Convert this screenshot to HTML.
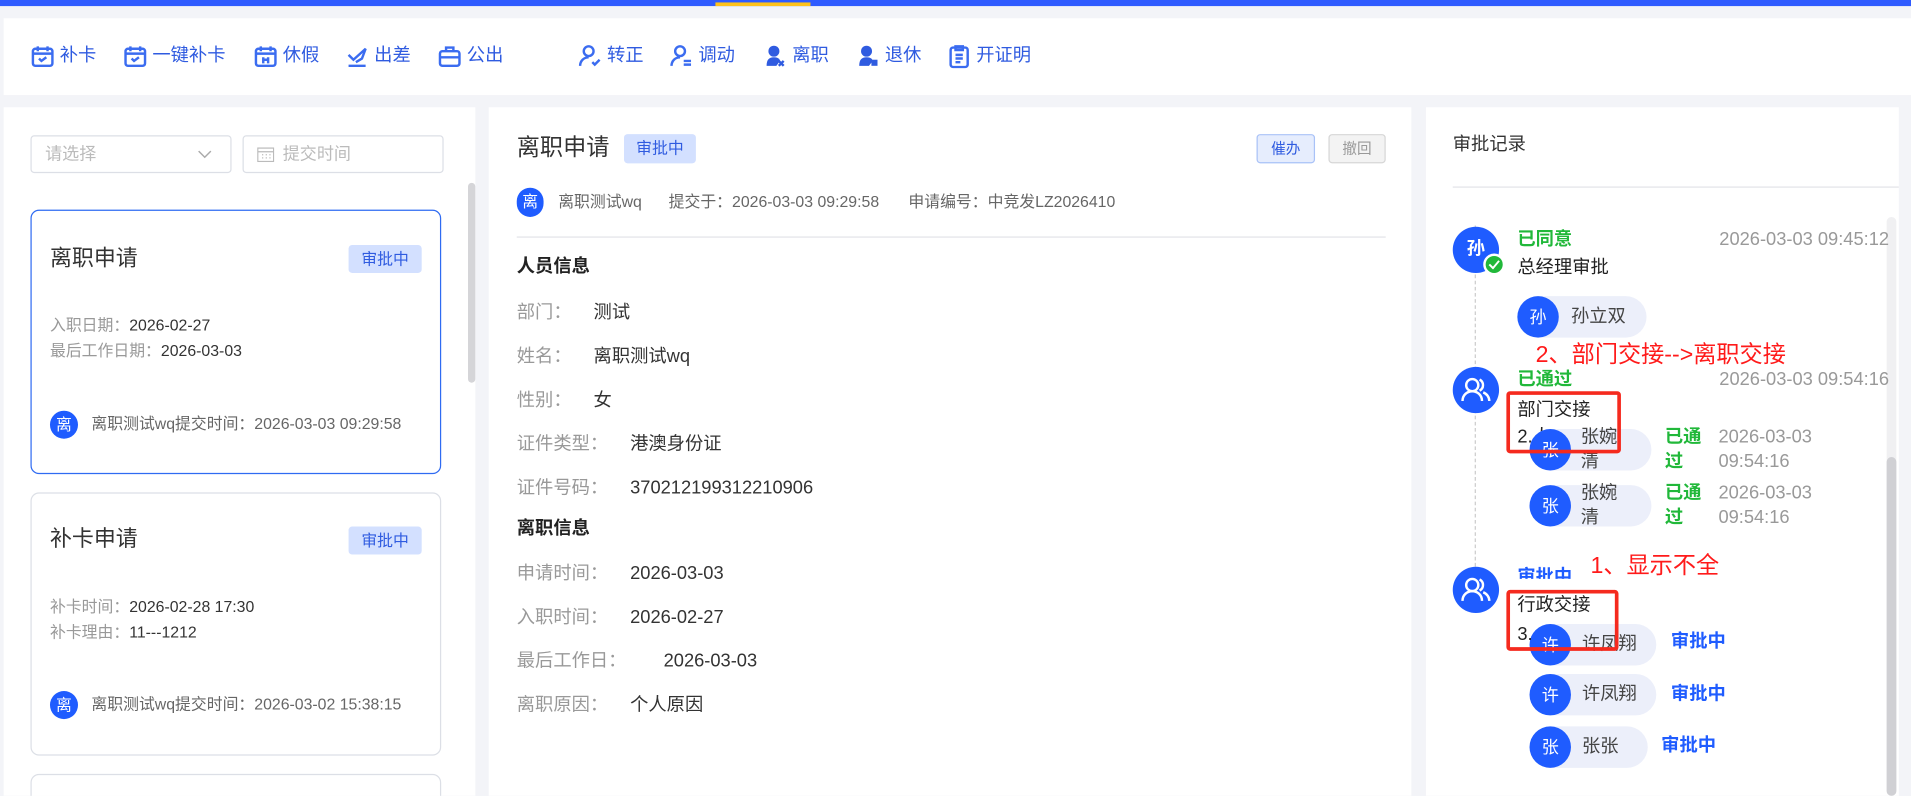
<!DOCTYPE html>
<html><head><meta charset="utf-8">
<style>
*{margin:0;padding:0;box-sizing:border-box}
html,body{width:1911px;height:796px;overflow:hidden;background:#f3f4f8}
body{font-family:"Liberation Sans","Noto Sans CJK SC",sans-serif;color:#333}
#w{position:absolute;left:0;top:0;width:1568px;height:653px;overflow:hidden;transform:scale(1.21875);transform-origin:0 0;background:#f3f4f8}
.a{position:absolute;white-space:nowrap}
.card{position:absolute;background:#fff}
.tb{position:absolute;top:36px;height:20px;line-height:20px;font-size:15px;color:#2f5be0;display:flex;align-items:center}
.tb svg{margin-right:4px}
.tag{position:absolute;background:#d3e0ff;color:#2f5be0;border-radius:3px;font-size:13px;text-align:center}
.av{position:absolute;border-radius:50%;background:#1f5cff;color:#fff;text-align:center;font-weight:bold}
.lc{position:absolute;left:25px;width:337px;border:1px solid #dcdfe6;border-radius:7px;background:#fff}
.lbl{color:#999}
.row{position:absolute;left:424px;font-size:15px;line-height:20px}
.row .lbl{margin-right:18px}
.pill{position:absolute;height:34px;border-radius:17px;background:#eceffa}
.pill .av{left:0;top:0;width:34px;height:34px;line-height:34px;font-size:14px;font-weight:normal}
.pill span{position:absolute;color:#444;font-size:15px}
.g{color:#21b83a;font-weight:bold}
.b{color:#1f5cff;font-weight:bold}
.t{color:#999;font-size:15px}
.red{color:#ff1a1a}
.rb{position:absolute;border:3px solid #f52a1e;border-radius:3px}
</style></head><body><div id="w">
<div class="a" style="left:0;top:0;width:1568px;height:5px;background:#2f5bff"></div>
<div class="a" style="left:587px;top:2px;width:78px;height:3px;background:#ffc21a"></div>
<div class="card" style="left:3px;top:15px;width:1565px;height:63px"></div>

<div class="tb" style="left:25px"><svg width="20" height="20" viewBox="0 0 20 20" fill="none" stroke="#3b6cf0" stroke-width="2"><rect x="2" y="4" width="16" height="14" rx="2"/><path d="M2 8h16M6 2v4M14 2v4M7 12l2 2 4-3"/></svg>补卡</div>
<div class="tb" style="left:101px"><svg width="20" height="20" viewBox="0 0 20 20" fill="none" stroke="#3b6cf0" stroke-width="2"><rect x="2" y="4" width="16" height="14" rx="2"/><path d="M2 8h16M6 2v4M14 2v4M7 12l2 2 4-3"/></svg>一键补卡</div>
<div class="tb" style="left:208px"><svg width="20" height="20" viewBox="0 0 20 20" fill="none" stroke="#3b6cf0" stroke-width="2"><rect x="2" y="4" width="16" height="14" rx="2"/><path d="M2 8h16M6 2v4M14 2v4M8 11v5M12 11v5M7 13h6"/></svg>休假</div>
<div class="tb" style="left:283px"><svg width="20" height="20" viewBox="0 0 20 20" fill="none" stroke="#3b6cf0" stroke-width="2"><path d="M3 9l4 4 10-9-3 8-5 3M3 18h14"/></svg>出差</div>
<div class="tb" style="left:359px"><svg width="20" height="20" viewBox="0 0 20 20" fill="none" stroke="#3b6cf0" stroke-width="2"><rect x="2" y="6" width="16" height="12" rx="2"/><path d="M7 6V3h6v3M2 11h16"/></svg>公出</div>
<div class="tb" style="left:474px"><svg width="20" height="20" viewBox="0 0 20 20" fill="none" stroke="#3b6cf0" stroke-width="2"><circle cx="9" cy="6" r="4"/><path d="M2 18c0-4 3-7 7-7M12 15l2 2 4-4"/></svg>转正</div>
<div class="tb" style="left:549px"><svg width="20" height="20" viewBox="0 0 20 20" fill="none" stroke="#3b6cf0" stroke-width="2"><circle cx="9" cy="6" r="4"/><path d="M2 18c0-4 3-7 7-7M12 14h6M12 17h6"/></svg>调动</div>
<div class="tb" style="left:626px"><svg width="20" height="20" viewBox="0 0 20 20" fill="#2f5be0"><circle cx="9" cy="6" r="4.5"/><path d="M3 18c0-5 2-7 6-7s5 2 5 3l-3 4z"/><path d="M13 14l4 4M17 14l-4 4" stroke="#2f5be0" stroke-width="2"/></svg>离职</div>
<div class="tb" style="left:702px"><svg width="20" height="20" viewBox="0 0 20 20" fill="#2f5be0"><circle cx="9" cy="6" r="4.5"/><path d="M3 18c0-5 2-7 6-7s5 2 5 3l-3 4z"/><rect x="13" y="13" width="5" height="5"/></svg>退休</div>
<div class="tb" style="left:777px"><svg width="20" height="20" viewBox="0 0 20 20" fill="none" stroke="#3b6cf0" stroke-width="2"><rect x="3" y="3" width="14" height="16" rx="2"/><path d="M7 2h6v3H7zM7 9h6M7 12h6M7 15h4"/></svg>开证明</div>

<!-- left panel -->
<div class="card" style="left:3px;top:88px;width:387px;height:565px"></div>
<div class="a" style="left:25px;top:111px;width:165px;height:31px;border:1px solid #dcdfe6;border-radius:3px"></div>
<div class="a" style="left:37px;top:116px;font-size:14px;line-height:20px;color:#bbb">请选择</div>
<svg class="a" style="left:162px;top:121px" width="12" height="10" viewBox="0 0 12 10" fill="none" stroke="#aaa" stroke-width="1.2"><path d="M1 3l5 5 5-5"/></svg>
<div class="a" style="left:199px;top:111px;width:165px;height:31px;border:1px solid #dcdfe6;border-radius:3px"></div>
<svg class="a" style="left:211px;top:120px" width="14" height="13" viewBox="0 0 14 13" fill="none" stroke="#bbb"><rect x="0.5" y="1.5" width="13" height="11"/><path d="M0.5 4.5h13M4 7h1M7 7h1M10 7h1M4 9.5h1M7 9.5h1M10 9.5h1"/></svg>
<div class="a" style="left:232px;top:116px;font-size:14px;line-height:20px;color:#bbb">提交时间</div>
<div class="a" style="left:384px;top:150px;width:6px;height:164px;border-radius:3px;background:#d5d5d8"></div>

<div class="lc" style="top:172px;height:217px;border-color:#2f6bf2"></div>
<div class="a" style="left:41px;top:200px;font-size:18px;line-height:24px;color:#333">离职申请</div>
<div class="tag" style="left:286px;top:201px;width:60px;height:23px;line-height:23px">审批中</div>
<div class="a" style="left:41px;top:257px;font-size:13px;line-height:20px"><span class="lbl">入职日期：</span>2026-02-27</div>
<div class="a" style="left:41px;top:278px;font-size:13px;line-height:20px"><span class="lbl">最后工作日期：</span>2026-03-03</div>
<div class="av" style="left:41px;top:337px;width:23px;height:23px;line-height:23px;font-size:13px;font-weight:normal">离</div>
<div class="a" style="left:75px;top:338px;font-size:13px;line-height:20px;color:#666">离职测试wq提交时间：2026-03-03 09:29:58</div>

<div class="lc" style="top:404px;height:216px"></div>
<div class="a" style="left:41px;top:430px;font-size:18px;line-height:24px;color:#333">补卡申请</div>
<div class="tag" style="left:286px;top:432px;width:60px;height:23px;line-height:23px">审批中</div>
<div class="a" style="left:41px;top:488px;font-size:13px;line-height:20px"><span class="lbl">补卡时间：</span>2026-02-28 17:30</div>
<div class="a" style="left:41px;top:509px;font-size:13px;line-height:20px"><span class="lbl">补卡理由：</span>11---1212</div>
<div class="av" style="left:41px;top:567px;width:23px;height:23px;line-height:23px;font-size:13px;font-weight:normal">离</div>
<div class="a" style="left:75px;top:568px;font-size:13px;line-height:20px;color:#666">离职测试wq提交时间：2026-03-02 15:38:15</div>
<div class="lc" style="top:635px;height:30px"></div>

<!-- middle -->
<div class="card" style="left:401px;top:88px;width:757px;height:565px"></div>
<div class="a" style="left:424px;top:109px;font-size:19px;line-height:26px;color:#333">离职申请</div>
<div class="tag" style="left:512px;top:110px;width:59px;height:24px;line-height:24px">审批中</div>
<div class="a" style="left:1031px;top:110px;width:48px;height:24px;line-height:22px;border:1px solid #a9c2f7;background:#e6edfd;color:#2f5be0;font-size:12px;text-align:center;border-radius:3px">催办</div>
<div class="a" style="left:1090px;top:110px;width:47px;height:24px;line-height:22px;border:1px solid #d6d6d6;background:#f3f3f3;color:#999;font-size:12px;text-align:center;border-radius:3px">撤回</div>
<div class="av" style="left:424px;top:154px;width:22px;height:24px;line-height:24px;font-size:13px;font-weight:normal;border-radius:11px">离</div>
<div class="a" style="left:458px;top:156px;font-size:13px;line-height:20px;color:#666">离职测试wq<span style="margin-left:22px">提交于：2026-03-03 09:29:58</span><span style="margin-left:24px">申请编号：中竞发LZ2026410</span></div>
<div class="a" style="left:424px;top:194px;width:713px;height:1px;background:#e2e3e8"></div>
<div class="row" style="top:209px;font-weight:bold;color:#222">人员信息</div>
<div class="row" style="top:247px"><span class="lbl">部门：</span>测试</div>
<div class="row" style="top:283px"><span class="lbl">姓名：</span>离职测试wq</div>
<div class="row" style="top:319px"><span class="lbl">性别：</span>女</div>
<div class="row" style="top:355px"><span class="lbl">证件类型：</span>港澳身份证</div>
<div class="row" style="top:391px"><span class="lbl">证件号码：</span>370212199312210906</div>
<div class="row" style="top:424px;font-weight:bold;color:#222">离职信息</div>
<div class="row" style="top:461px"><span class="lbl">申请时间：</span>2026-03-03</div>
<div class="row" style="top:497px"><span class="lbl">入职时间：</span>2026-02-27</div>
<div class="row" style="top:533px"><span class="lbl">最后工作日：</span>&nbsp;&nbsp;&nbsp;2026-03-03</div>
<div class="row" style="top:569px"><span class="lbl">离职原因：</span>个人原因</div>

<!-- right -->
<div class="card" style="left:1170px;top:88px;width:388px;height:565px"></div>
<div class="a" style="left:1548px;top:178px;width:8px;height:475px;border-radius:4px;background:#f0f0f2"></div>
<div class="a" style="left:1548px;top:375px;width:8px;height:278px;border-radius:4px;background:#d0d0d4"></div>
<div class="a" style="left:1192px;top:109px;font-size:15px;line-height:20px;color:#333">审批记录</div>
<div class="a" style="left:1192px;top:153px;width:366px;height:1px;background:#e2e3e8"></div>
<div class="a" style="left:1210px;top:185px;height:295px;border-left:1px dashed #ccc"></div>

<div class="av" style="left:1192px;top:186px;width:38px;height:38px;line-height:38px;font-size:15px">孙</div>
<div class="a" style="left:1217px;top:208px;width:18px;height:18px;border-radius:50%;background:#21b83a;border:2px solid #fff"></div>
<svg class="a" style="left:1221px;top:213px" width="10" height="8" viewBox="0 0 10 8" fill="none" stroke="#fff" stroke-width="1.6"><path d="M1 4l3 3 5-6"/></svg>
<div class="a g" style="left:1245px;top:187px;font-size:15px;line-height:20px">已同意</div>
<div class="a t" style="right:18px;top:187px;line-height:20px">2026-03-03 09:45:12</div>
<div class="a" style="left:1245px;top:210px;font-size:15px;line-height:20px;color:#222">总经理审批</div>
<div class="pill" style="left:1245px;top:243px;width:106px"><div class="av">孙</div><span style="left:44px;top:7px;line-height:20px">孙立双</span></div>
<div class="a red" style="left:1260px;top:280px;font-size:19px;line-height:24px">2、部门交接--&gt;离职交接</div>

<div class="av" style="left:1192px;top:301px;width:38px;height:38px"></div>
<svg class="a" style="left:1198px;top:308px" width="26" height="24" viewBox="0 0 26 24" fill="none" stroke="#fff" stroke-width="2"><circle cx="10" cy="8" r="5"/><path d="M2 21c0-5 4-8 8-8s8 3 8 8M16 3.5a5 5 0 0 1 0 9M19 14c3 1 5 4 5 7"/></svg>
<div class="a g" style="left:1245px;top:302px;font-size:15px;line-height:20px">已通过</div>
<div class="a t" style="right:18px;top:302px;line-height:20px">2026-03-03 09:54:16</div>
<div class="a" style="left:1245px;top:327px;font-size:15px;line-height:20px;color:#222">部门交接</div>
<div class="a" style="left:1245px;top:349px;font-size:15px;line-height:20px;color:#222">2.人</div>
<div class="pill" style="left:1255px;top:352px;width:100px"><div class="av">张</div><span style="left:42px;top:-3px;line-height:20px">张婉<br>清</span></div>
<div class="a g" style="left:1366px;top:349px;font-size:15px;line-height:20px">已通<br>过</div>
<div class="a t" style="left:1410px;top:349px;line-height:20px">2026-03-03<br>09:54:16</div>
<div class="pill" style="left:1255px;top:398px;width:100px"><div class="av">张</div><span style="left:42px;top:-3px;line-height:20px">张婉<br>清</span></div>
<div class="a g" style="left:1366px;top:395px;font-size:15px;line-height:20px">已通<br>过</div>
<div class="a t" style="left:1410px;top:395px;line-height:20px">2026-03-03<br>09:54:16</div>
<div class="rb" style="left:1236px;top:321px;width:94px;height:51px"></div>

<div class="av" style="left:1192px;top:465px;width:38px;height:38px"></div>
<svg class="a" style="left:1198px;top:472px" width="26" height="24" viewBox="0 0 26 24" fill="none" stroke="#fff" stroke-width="2"><circle cx="10" cy="8" r="5"/><path d="M2 21c0-5 4-8 8-8s8 3 8 8M16 3.5a5 5 0 0 1 0 9M19 14c3 1 5 4 5 7"/></svg>
<div class="a b" style="left:1245px;top:464px;font-size:15px;line-height:20px;height:11px;overflow:hidden">审批中</div>
<div class="a red" style="left:1305px;top:453px;font-size:19px;line-height:24px">1、显示不全</div>
<div class="pill" style="left:1255px;top:512px;width:104px"><div class="av">许</div><span style="left:43px;top:7px;line-height:20px">许凤翔</span></div>
<div class="a" style="left:1245px;top:487px;font-size:15px;line-height:20px;color:#222;background:#fff">行政交接</div>
<div class="a" style="left:1245px;top:511px;font-size:15px;line-height:20px;color:#222">3.</div>
<div class="rb" style="left:1236px;top:484px;width:92px;height:50px"></div>
<div class="a b" style="left:1371px;top:517px;font-size:15px;line-height:20px">审批中</div>
<div class="pill" style="left:1255px;top:553px;width:104px"><div class="av">许</div><span style="left:43px;top:7px;line-height:20px">许凤翔</span></div>
<div class="a b" style="left:1371px;top:560px;font-size:15px;line-height:20px">审批中</div>
<div class="pill" style="left:1255px;top:596px;width:97px"><div class="av">张</div><span style="left:43px;top:7px;line-height:20px">张张</span></div>
<div class="a b" style="left:1363px;top:602px;font-size:15px;line-height:20px">审批中</div>
</div></body></html>
